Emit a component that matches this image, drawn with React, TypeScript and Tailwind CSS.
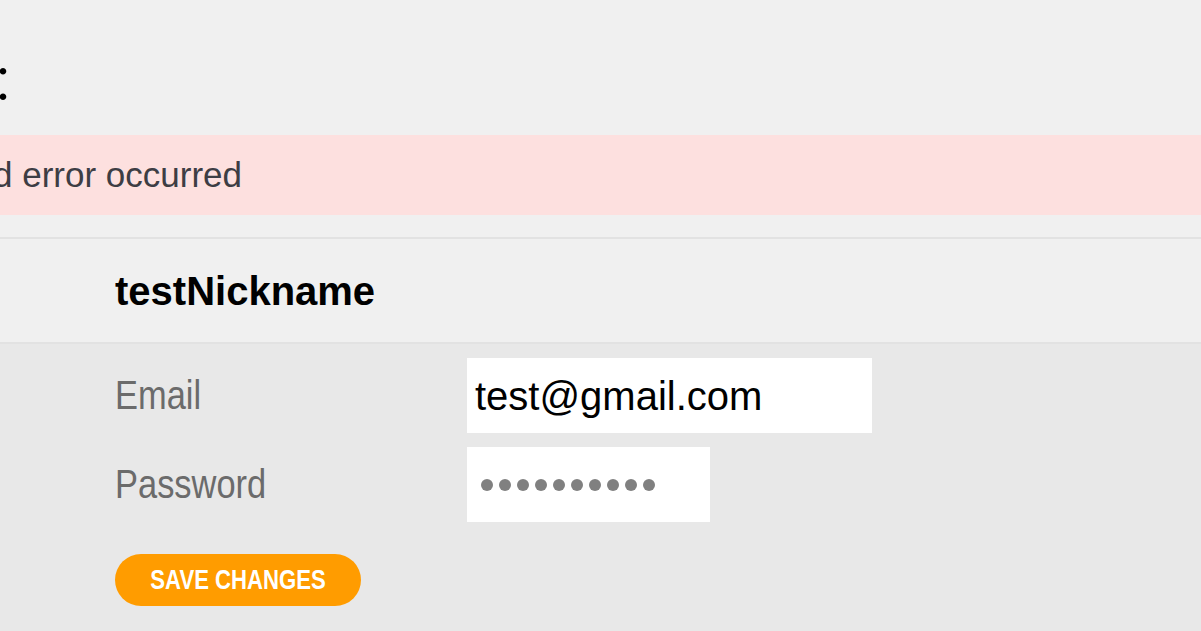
const arial = "font-['Liberation_Sans',Arial,sans-serif]";

function Campo({ rotulo, largura, children }: { rotulo: string; largura: string; children: React.ReactNode }) {
  return (
    <div className="flex items-center">
      <span className="w-[352px] text-[41px] leading-none text-[#6b6b6b]">
        <span className="inline-block origin-left scale-x-[0.84]">{rotulo}</span>
      </span>
      <div className={`${largura} flex h-[75px] items-center bg-white px-2`}>{children}</div>
    </div>
  );
}

export default function App() {
  return (
    <div className={`${arial} flex min-h-screen flex-col overflow-hidden bg-[#f0f0f0]`}>
      {/* título cortado, só os dois pontos aparecem */}
      <div className="h-[135px] overflow-hidden pt-[56px]">
        <span className="-ml-[22px] block font-['Noto_Sans_CJK_SC',sans-serif] text-[50px] leading-none text-black">︰</span>
      </div>

      <div className="relative flex h-[80px] items-center bg-[#fde0df] text-[35px] text-[#3d3d44]">
        <p className="relative -ml-[7px] whitespace-nowrap">
          <span className="absolute right-full">An unexpecte</span>d error occurred
        </p>
      </div>

      <div className="mt-[22px] border-y-2 border-[#e2e2e2]">
        <div className="flex h-[103px] items-center pl-[115px] text-[40px] font-bold text-black">testNickname</div>
      </div>

      <div className="flex flex-1 flex-col gap-[14px] bg-[#e8e8e8] pl-[115px] pt-[14px]">
        <Campo rotulo="Email" largura="w-[405px]">
          <span className="text-[40px] leading-none text-black">test@gmail.com</span>
        </Campo>
        <Campo rotulo="Password" largura="w-[243px]">
          <div className="ml-[6px] flex gap-[6px]">
            {Array.from({ length: 10 }).map((_, i) => (
              <span key={i} className="h-[12px] w-[12px] rounded-full bg-[#808080]" />
            ))}
          </div>
        </Campo>
        <button className="mt-[18px] flex h-[52px] w-[246px] items-center justify-center rounded-full bg-[#ff9c00] text-[27px] font-bold text-white">
          <span className="inline-block scale-x-[0.82] whitespace-nowrap">SAVE CHANGES</span>
        </button>
      </div>
    </div>
  );
}
